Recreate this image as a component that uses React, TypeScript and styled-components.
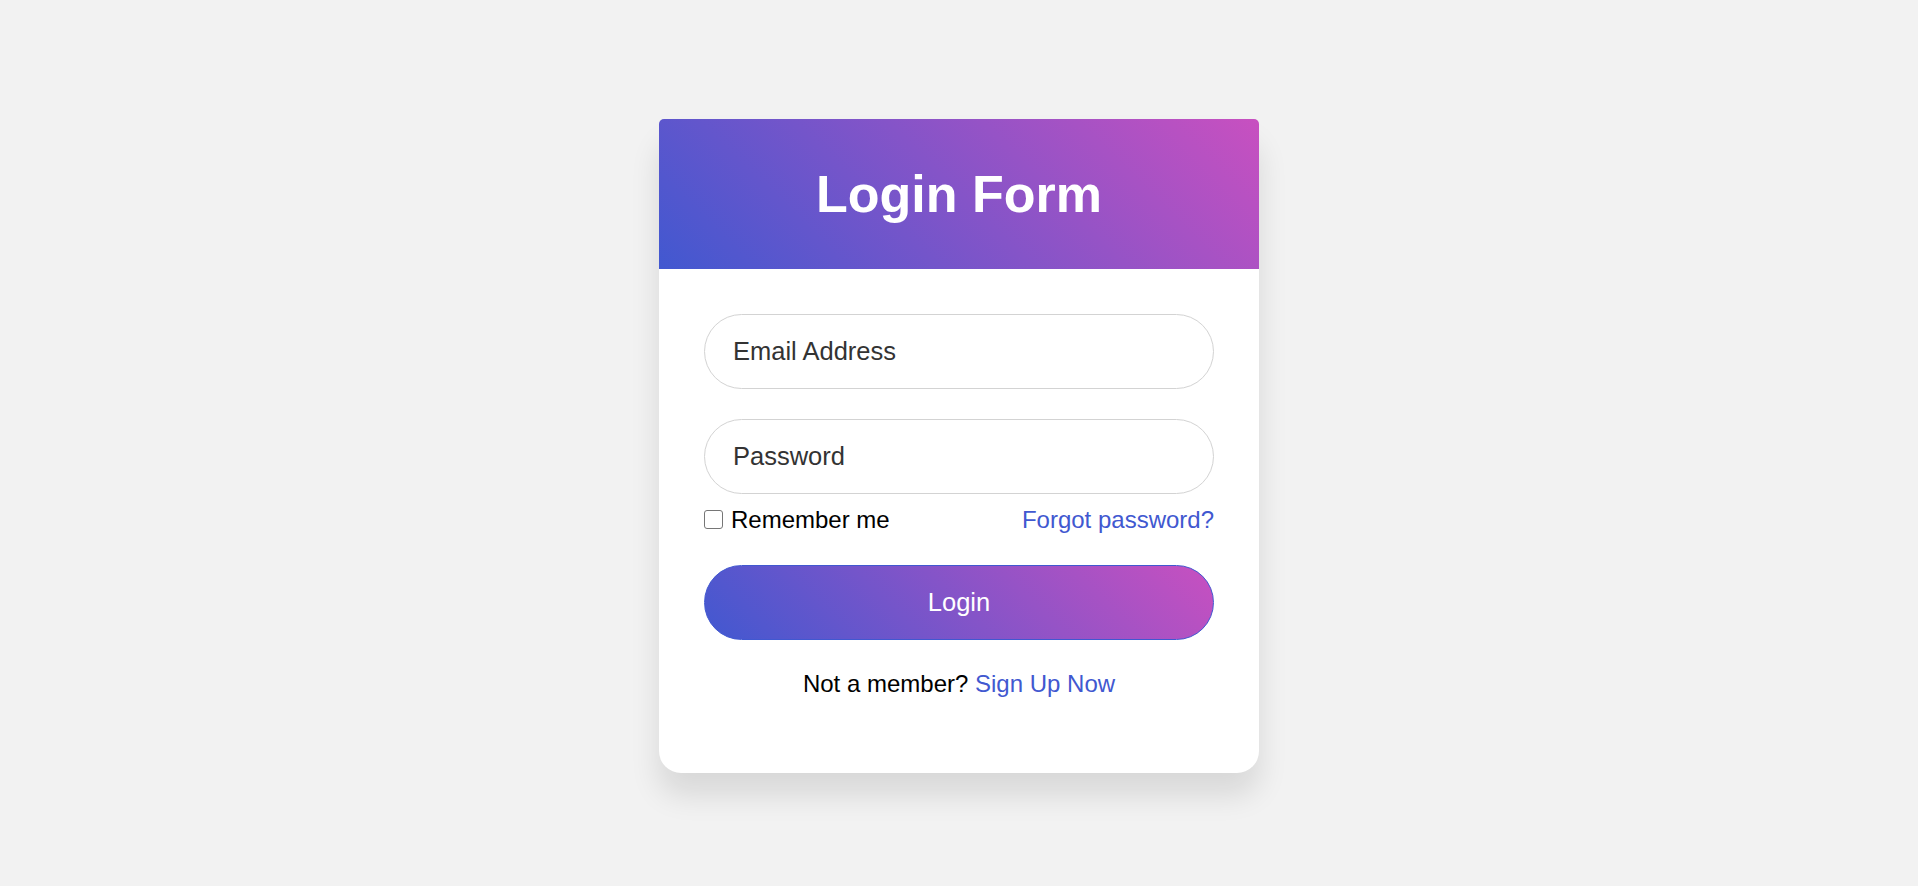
import React from "react";
import styled, { createGlobalStyle } from "styled-components";

const GlobalStyle = createGlobalStyle`
  html, body {
    margin: 0;
    padding: 0;
    background: #f2f2f2;
    font-family: "Liberation Sans", Arial, sans-serif;
  }
  * { box-sizing: border-box; }
`;

const Page = styled.div`
  min-height: 886px;
  display: flex;
  flex-direction: column;
  align-items: center;
  padding-top: 119px;
`;

const Card = styled.div`
  width: 600px;
  background: #ffffff;
  border-radius: 22px;
  box-shadow: 0 22px 30px rgba(0, 0, 0, 0.11);
`;

const Header = styled.div`
  height: 150px;
  display: flex;
  align-items: center;
  justify-content: center;
  border-radius: 5px 5px 0 0;
  background: linear-gradient(45deg, #4158d0, #c850c0);
`;

const Title = styled.h1`
  margin: 0;
  color: #ffffff;
  font-size: 52px;
  font-weight: 700;
  line-height: normal;
`;

const Form = styled.form`
  display: flex;
  flex-direction: column;
  padding: 45px 45px 75px;
`;

const Input = styled.input<{ $gap?: number }>`
  height: 75px;
  width: 100%;
  margin-top: ${(p) => p.$gap ?? 0}px;
  padding: 0 28px;
  border: 1px solid #d3d3d3;
  border-radius: 37.5px;
  font-family: "Liberation Sans", Arial, sans-serif;
  font-size: 25.5px;
  color: #333333;
  background: #ffffff;
  outline: none;
  &::placeholder {
    color: #333333;
    opacity: 1;
  }
`;

const OptionsRow = styled.div`
  margin-top: 12px;
  display: flex;
  align-items: center;
  justify-content: space-between;
  font-size: 24px;
  line-height: normal;
`;

const RememberLabel = styled.label`
  display: flex;
  align-items: center;
  gap: 8px;
  color: #000000;
`;

const CheckBox = styled.input`
  appearance: none;
  margin: 0 0 2px 0;
  width: 19px;
  height: 19px;
  border: 1.5px solid #767676;
  border-radius: 3px;
  background: #ffffff;
`;

const Link = styled.a`
  color: #4158d0;
  text-decoration: none;
`;

const SubmitButton = styled.button`
  margin-top: 30.5px;
  height: 75px;
  width: 100%;
  border: 1px solid #4158d0;
  border-radius: 37.5px;
  background: linear-gradient(45deg, #4158d0, #c850c0);
  color: #ffffff;
  font-family: "Liberation Sans", Arial, sans-serif;
  font-size: 25.5px;
  cursor: pointer;
`;

const SignupText = styled.div`
  margin-top: 30px;
  text-align: center;
  font-size: 24px;
  line-height: normal;
  color: #000000;
`;

export default function App() {
  return (
    <>
      <GlobalStyle />
      <Page>
        <Card>
          <Header>
            <Title>Login Form</Title>
          </Header>
          <Form onSubmit={(e) => e.preventDefault()}>
            <Input type="text" placeholder="Email Address" />
            <Input type="password" placeholder="Password" $gap={30} />
            <OptionsRow>
              <RememberLabel>
                <CheckBox type="checkbox" />
                Remember me
              </RememberLabel>
              <Link href="#">Forgot password?</Link>
            </OptionsRow>
            <SubmitButton type="submit">Login</SubmitButton>
            <SignupText>
              Not a member? <Link href="#">Sign Up Now</Link>
            </SignupText>
          </Form>
        </Card>
      </Page>
    </>
  );
}
